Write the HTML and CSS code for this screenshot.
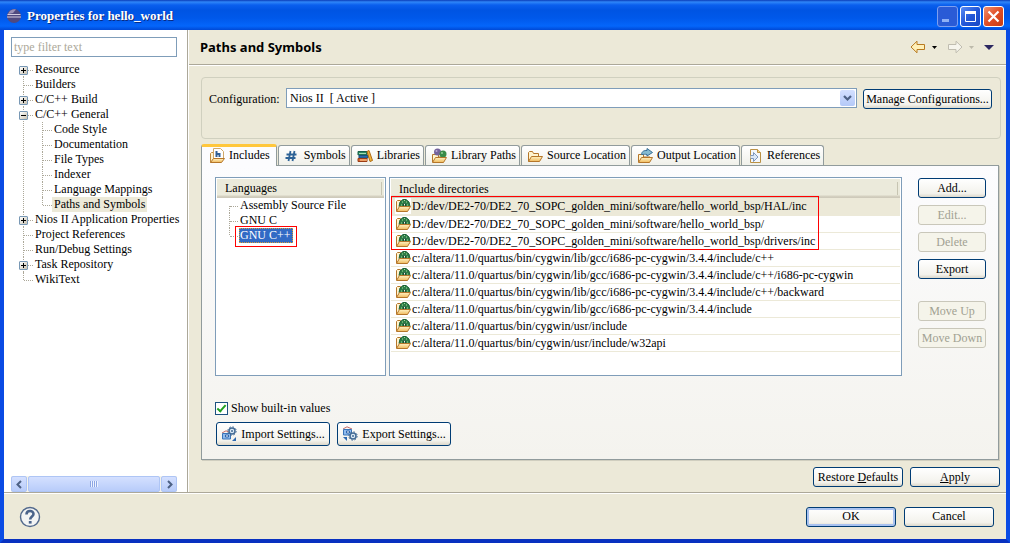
FILE: index.html
```html
<!DOCTYPE html>
<html lang="en">
<head>
<meta charset="utf-8">
<title>Properties for hello_world</title>
<link rel="stylesheet" href="styles.css">
</head>
<body>
<svg class="sprites" aria-hidden="true">
  <defs>
    <linearGradient id="fold" x1="0" y1="0" x2="0" y2="1"><stop offset="0" stop-color="#fff3c4"/><stop offset="1" stop-color="#f0b95c"/></linearGradient>
    <symbol id="folder" viewBox="0 0 16 16">
      <path d="M1.500 13.500V4.500L2.500 3.500H5.500L6.500 5.500H11.500V8.500" fill="#fff4cf" stroke="#b5762a"/>
      <path d="M1.500 13.500L4.500 8.500H15.500L12.500 13.500Z" fill="url(#fold)" stroke="#b5762a"/>
    </symbol>
    <symbol id="include" viewBox="0 0 16 16">
      <path d="M1.500 14.500V5.500L2.500 4.500H5.500V12" fill="#fff4cf" stroke="#c08a3c"/>
      <path d="M4.500 11V.5H11.500L14.500 3.500V11Z" fill="#fff" stroke="#d0a868"/>
      <path d="M7.500 3V9M7.500 6H10.500V9" fill="none" stroke="#2f5f94" stroke-width="2"/>
      <path d="M1.500 14.500L4.500 10.500H15.500L12.500 14.500Z" fill="url(#fold)" stroke="#b5762a"/>
    </symbol>
    <symbol id="hash" viewBox="0 0 16 16">
      <path d="M6.500 3L4.500 13M10.500 3L8.500 13M2.500 6.500H12.500M1.500 10H11.500" fill="none" stroke="#2d6296" stroke-width="1.800"/>
    </symbol>
    <symbol id="books" viewBox="0 0 16 16">
      <path d="M1 3.500H10V7H1Z" fill="#2d8b62" stroke="#17604a"/><path d="M2 5.500H9" stroke="#a8ddb5"/>
      <path d="M2 7.500H11V10H2Z" fill="#2a6ea8" stroke="#1b4d80"/>
      <path d="M1 10.500H10V13.500H1Z" fill="#d9642e" stroke="#9c3c14"/><path d="M3 12H10" stroke="#ffd9a0"/>
      <path d="M10 3.500L12 2.500L15.500 12.500L13 13.500Z" fill="#f5b53a" stroke="#ad6a12"/>
    </symbol>
    <symbol id="libpaths" viewBox="0 0 16 16">
      <path d="M1.500 14V6.500H7.500V9H12" fill="#fff4cf" stroke="#b5762a"/>
      <circle cx="6.500" cy="4" r="3.500" fill="#75639d"/><circle cx="5.500" cy="3" r="1" fill="#b8a8d5"/>
      <circle cx="12" cy="6" r="3.500" fill="#398b48"/><circle cx="11" cy="5" r="1" fill="#94d19b"/>
      <path d="M1.500 14.500L4.500 9.500H15.500L12.500 14.500Z" fill="url(#fold)" stroke="#b5762a"/>
    </symbol>
    <symbol id="output" viewBox="0 0 16 16">
      <path d="M1.500 14V6.500H6.500V9H13" fill="#fff4cf" stroke="#b5762a"/>
      <path d="M4.500 6.500C5 3 7 2.500 10 2.500V.5L15.500 4.500L10 8V6.500C8 6 7 6.500 4.500 6.500Z" fill="#86bbd0" stroke="#376e96"/>
      <path d="M1.500 14.500L4.500 9.500H15.500L12.500 14.500Z" fill="url(#fold)" stroke="#b5762a"/>
    </symbol>
    <symbol id="refs" viewBox="0 0 16 16">
      <path d="M3.500 1.500H10.500L13.500 4.500V14.500H3.500Z" fill="#f4f7fc" stroke="#bb9145"/>
      <path d="M10.500 1.500V4.500H13.500" fill="#f4d88c" stroke="#bb9145"/>
      <path d="M3.500 7.500H6.500V4.500L11 9L6.500 13.500V10.500H3.500" fill="#dce8f8" stroke="#7f98be"/>
    </symbol>
    <symbol id="incdir" viewBox="0 0 16 16">
      <path d="M1.500 13V3.500L2.500 2.500H5.500V9" fill="#fff4cf" stroke="#b5762a"/>
      <path d="M4 8.500L5 4L8 1.500H11L14 4L15 8.500Z" fill="#2d7d46" stroke="#1d6238"/>
      <path d="M7 4H8M11 4H12M6 7H7M12 7H13M9 2.500H10" stroke="#a6dc9e"/>
      <path d="M8.500 8L8.500 6L9.500 5L10.500 6V8Z" fill="#eff7e7" stroke="#174f33"/>
      <path d="M1.500 13.500L4.500 8.500H15.500L12.500 13.500Z" fill="url(#fold)" stroke="#b5762a"/>
    </symbol>
    <symbol id="gear" viewBox="0 0 10 10">
      <circle cx="5" cy="5" r="3" fill="#dbe9f5" stroke="#436b95" stroke-width="1.500"/>
      <circle cx="5" cy="5" r="4.200" fill="none" stroke="#436b95" stroke-dasharray="1.600 1.700"/>
      <circle cx="5" cy="5" r="1" fill="#436b95"/>
    </symbol>
    <symbol id="house" viewBox="0 0 11 10">
      <path d="M1 3L5 .8L10 3" fill="none" stroke="#c46d68"/>
      <path d="M1.500 3.500H9.500V9H1.500Z" fill="#8fbcf0" stroke="#3974b8"/><path d="M4.500 5H7.500V7H4.500Z" fill="#fff" stroke="#3165a8"/>
    </symbol>
    <symbol id="import" viewBox="0 0 16 16">
      <use href="#house" x="0" y="4" width="11" height="10"/><use href="#gear" x="6" y="0" width="10" height="10"/><path d="M15 11V15H11Z" fill="#2c68b0"/>
    </symbol>
    <symbol id="export" viewBox="0 0 16 16">
      <use href="#house" x="0" y="0" width="11" height="10"/><use href="#gear" x="6" y="5" width="10" height="10"/><path d="M1 11H5V15Z" fill="#2c68b0"/>
    </symbol>
  </defs>
</svg>
<div class="window">
  <header class="titlebar">
    <svg class="logo" viewBox="0 0 16 16" aria-hidden="true"><circle cx="8" cy="8" r="7" fill="#50497f"/><path d="M2 6A7 7 0 0 1 10 1.500L7 5Z" fill="#9c92b8"/><path d="M1.500 6.500H14.500M1 9H15" stroke="#d4cde2"/></svg>
    <h1>Properties for hello_world</h1>
    <div class="winbtns">
      <button class="wb dim" aria-label="Minimize"><svg viewBox="0 0 19 19"><path d="M4 13.500H11" stroke="#8fb0f5" stroke-width="3"/></svg></button>
      <button class="wb" aria-label="Maximize"><svg viewBox="0 0 19 19"><path d="M4.500 5V14.500H14.500V5" fill="none" stroke="#fff"/><path d="M4 5.500H15" stroke="#fff" stroke-width="3"/></svg></button>
      <button class="wb close" aria-label="Close"><svg viewBox="0 0 19 19"><path d="M4.500 4.500L14.500 14.500M14.500 4.500L4.500 14.500" stroke="#fff" stroke-width="2.200"/></svg></button>
    </div>
  </header>
  <div class="content">
    <nav class="side">
      <input class="filter" type="text" placeholder="type filter text" aria-label="Filter">
      <ul class="tree">
        <li class="exp"><span>Resource</span></li>
        <li><span>Builders</span></li>
        <li class="exp"><span>C/C++ Build</span></li>
        <li class="exp open"><span>C/C++ General</span>
          <ul>
            <li><span>Code Style</span></li>
            <li><span>Documentation</span></li>
            <li><span>File Types</span></li>
            <li><span>Indexer</span></li>
            <li><span>Language Mappings</span></li>
            <li><span class="current">Paths and Symbols</span></li>
          </ul>
        </li>
        <li class="exp"><span>Nios II Application Properties</span></li>
        <li><span>Project References</span></li>
        <li><span>Run/Debug Settings</span></li>
        <li class="exp"><span>Task Repository</span></li>
        <li><span>WikiText</span></li>
      </ul>
      <div class="hscroll">
        <button class="sbtn" aria-label="Scroll left"><svg viewBox="0 0 9 9"><path d="M6 1L2.500 4.500L6 8" fill="none" stroke="#4d6185" stroke-width="2"/></svg></button>
        <div class="thumb"><i></i><i></i><i></i><i></i></div>
        <button class="sbtn" aria-label="Scroll right"><svg viewBox="0 0 9 9"><path d="M3 1L6.500 4.500L3 8" fill="none" stroke="#4d6185" stroke-width="2"/></svg></button>
      </div>
    </nav>
    <main>
      <div class="pagehead">
        <h2>Paths and Symbols</h2>
        <div class="history">
          <button aria-label="Back"><svg width="16" height="14" viewBox="0 0 16 14"><path d="M1 7L7 1.200V4.500H14.500V9.500H7V12.800Z" fill="#fff0b8" stroke="#b87a20"/></svg></button>
          <button aria-label="Back history"><svg width="5" height="3" viewBox="0 0 5 3"><path d="M0 0H5L2.500 3Z"/></svg></button>
          <button class="fwd" aria-label="Forward"><svg width="16" height="14" viewBox="0 0 16 14"><path d="M15 7L9 1.200V4.500H1.500V9.500H9V12.800Z" fill="#f6f5ed" stroke="#c0bdb0"/></svg></button>
          <button aria-label="Forward history"><svg width="5" height="3" viewBox="0 0 5 3"><path d="M0 0H5L2.500 3Z" fill="#bdbaab"/></svg></button>
          <button class="menu" aria-label="Menu"><svg width="10" height="5" viewBox="0 0 10 5"><path d="M0 0H10L5 5Z" fill="#2c2860"/></svg></button>
        </div>
      </div>
      <div class="page">
        <section class="config">
          <label for="cfg">Configuration:</label>
          <div class="combo">
            <select id="cfg"><option>Nios II&nbsp; [ Active ]</option></select>
            <svg class="drop" viewBox="0 0 15 16" aria-hidden="true"><path d="M4 6L7.500 9.500L11 6" fill="none" stroke="#4d6185" stroke-width="2.200"/></svg>
          </div>
          <button class="btn manage">Manage Configurations...</button>
        </section>
        <div class="tabs" role="tablist">
          <button class="tab active" role="tab" aria-selected="true"><svg><use href="#include"/></svg>Includes</button>
          <button class="tab" role="tab"><svg><use href="#hash"/></svg>Symbols</button>
          <button class="tab" role="tab"><svg><use href="#books"/></svg>Libraries</button>
          <button class="tab" role="tab"><svg><use href="#libpaths"/></svg>Library Paths</button>
          <button class="tab" role="tab"><svg><use href="#folder"/></svg>Source Location</button>
          <button class="tab" role="tab"><svg><use href="#output"/></svg>Output Location</button>
          <button class="tab" role="tab"><svg><use href="#refs"/></svg>References</button>
        </div>
        <section class="panel">
          <div class="lists">
            <div class="box langs">
              <div class="colhead">Languages</div>
              <ul class="langtree">
                <li><span>Assembly Source File</span></li>
                <li><span>GNU C</span></li>
                <li><span class="sel">GNU C++</span></li>
              </ul>
            </div>
            <div class="box dirs">
              <table>
                <thead><tr><th class="colhead">Include directories</th></tr></thead>
                <tbody>
                  <tr class="hl"><td><svg><use href="#incdir"/></svg>D:/dev/DE2-70/DE2_70_SOPC_golden_mini/software/hello_world_bsp/HAL/inc</td></tr>
                  <tr><td><svg><use href="#incdir"/></svg>D:/dev/DE2-70/DE2_70_SOPC_golden_mini/software/hello_world_bsp/</td></tr>
                  <tr><td><svg><use href="#incdir"/></svg>D:/dev/DE2-70/DE2_70_SOPC_golden_mini/software/hello_world_bsp/drivers/inc</td></tr>
                  <tr><td><svg><use href="#incdir"/></svg>c:/altera/11.0/quartus/bin/cygwin/lib/gcc/i686-pc-cygwin/3.4.4/include/c++</td></tr>
                  <tr><td><svg><use href="#incdir"/></svg>c:/altera/11.0/quartus/bin/cygwin/lib/gcc/i686-pc-cygwin/3.4.4/include/c++/i686-pc-cygwin</td></tr>
                  <tr><td><svg><use href="#incdir"/></svg>c:/altera/11.0/quartus/bin/cygwin/lib/gcc/i686-pc-cygwin/3.4.4/include/c++/backward</td></tr>
                  <tr><td><svg><use href="#incdir"/></svg>c:/altera/11.0/quartus/bin/cygwin/lib/gcc/i686-pc-cygwin/3.4.4/include</td></tr>
                  <tr><td><svg><use href="#incdir"/></svg>c:/altera/11.0/quartus/bin/cygwin/usr/include</td></tr>
                  <tr><td><svg><use href="#incdir"/></svg>c:/altera/11.0/quartus/bin/cygwin/usr/include/w32api</td></tr>
                </tbody>
              </table>
            </div>
            <div class="actions">
              <button class="btn">Add...</button>
              <button class="btn" disabled>Edit...</button>
              <button class="btn" disabled>Delete</button>
              <button class="btn">Export</button>
              <button class="btn apart" disabled>Move Up</button>
              <button class="btn" disabled>Move Down</button>
            </div>
          </div>
          <label class="check"><input type="checkbox" checked>Show built-in values</label>
          <div class="io">
            <button class="btn tall"><svg><use href="#import"/></svg>Import Settings...</button>
            <button class="btn tall"><svg><use href="#export"/></svg>Export Settings...</button>
          </div>
        </section>
        <div class="pagebtns">
          <button class="btn wide"><span>Restore <u>D</u>efaults</span></button>
          <button class="btn wide"><span><u>A</u>pply</span></button>
        </div>
      </div>
    </main>
  </div>
  <footer>
    <button class="help" aria-label="Help"><svg viewBox="0 0 22 22"><circle cx="11" cy="11" r="9.500" fill="#f3f4f4" stroke="#52698c" stroke-width="1.400"/><path d="M7.500 8.500C7.500 4 14.500 4 14.500 8C14.500 10.500 11.200 10.500 11.200 13.500" fill="none" stroke="#4a638a" stroke-width="2.600"/><path d="M9.800 15H12.600V17.600H9.800Z" fill="#4a638a"/></svg></button>
    <div class="dlgbtns">
      <button class="btn wide ok">OK</button>
      <button class="btn wide">Cancel</button>
    </div>
  </footer>
</div>
</body>
</html>
```

FILE: styles.css
```css
*, *::before, *::after { box-sizing: border-box; }
body { margin: 0; background: #ece9d8; }
body, button, input, select { font-family: "Liberation Serif", serif; font-size: 12px; color: #000; }
button { padding: 0; border: 0; background: none; }
ul { list-style: none; margin: 0; padding: 0; }
svg { display: block; flex: none; }
.sprites { position: absolute; width: 0; height: 0; }

.window {
  min-height: 100vh; display: flex; flex-direction: column;
  border: solid #0a4be4; border-width: 0 4px 4px; border-bottom-color: #0831c0;
  background: #ece9d8;
}
.titlebar {
  height: 30px; margin: 0 -4px; padding: 2px 6px 0; display: flex; align-items: center; gap: 5px;
  background: linear-gradient(#0a3cb8 0, #2f86f8 2px, #0a5fee 5px, #0054e3 10px, #0058ea 18px, #0466fb 26px, #0049d6 30px);
}
.logo { width: 16px; height: 16px; }
h1 { flex: 1; margin: 0; font-size: 13px; line-height: 16px; color: #fff; text-shadow: 1px 1px #0a2a80; }
.winbtns { display: flex; gap: 2px; }
.wb {
  width: 21px; height: 21px; border: 1px solid #fff; border-radius: 3px;
  background: linear-gradient(135deg, #5a8cf4, #2257d8 50%, #1747c4);
}
.wb.dim { border-color: #7d9ff0; background: #2a5bd6; }
.wb.close { background: linear-gradient(135deg, #f09070, #e04e26 50%, #c83c14); }

.content { flex: 1; display: flex; border-bottom: 1px solid #aca899; }
.side {
  width: 184px; flex: none; display: flex; flex-direction: column; padding: 7px 10px 0 7px;
  background: #fff; border-right: 1px solid #aca899;
}
.filter { width: 100%; height: 20px; border: 1px solid #7f9db9; padding: 0 2px; background: #fff; }
.filter::placeholder { color: #aca899; opacity: 1; }
.tree { flex: 1; margin-top: 5px; white-space: nowrap; line-height: 15px; }
.tree li { position: relative; padding-left: 24px; }
.tree li::before { content: ""; position: absolute; left: 12px; top: 0; bottom: 0; border-left: 1px dotted #aca899; }
.tree > li:first-child::before { top: 8px; }
.tree li:last-child::before { bottom: auto; height: 8px; }
.tree li::after { content: ""; position: absolute; left: 13px; top: 8px; width: 9px; border-top: 1px dotted #aca899; }
.tree ul { margin-left: -5px; }
.tree li span { display: inline-block; }
.tree .exp > span::before {
  content: ""; position: absolute; z-index: 1; left: 8px; top: 4px; width: 9px; height: 9px;
  border: 1px solid #7898b5; border-radius: 1px;
  background: linear-gradient(#000, #000) 1px 3px / 5px 1px no-repeat, linear-gradient(#000, #000) 3px 1px / 1px 5px no-repeat, linear-gradient(135deg, #fff, #c8c2b2);
}
.tree .open > span::before { background: linear-gradient(#000, #000) 1px 3px / 5px 1px no-repeat, linear-gradient(135deg, #fff, #c8c2b2); }
.tree .current { background: #ece9d8; padding: 0 2px; margin-left: -2px; }
.hscroll { display: flex; height: 16px; gap: 1px; background: #f3f2ea; }
.sbtn, .thumb { border: 1px solid #aec5f5; border-radius: 2px; background: linear-gradient(#d4e0ff, #b8ccfa); display: flex; align-items: center; justify-content: center; }
.sbtn { width: 16px; }
.sbtn svg { width: 9px; height: 9px; }
.thumb { flex: 1; }
.thumb i { width: 2px; height: 6px; background: #8ca6e4; border-right: 1px solid #eef3ff; }

main { flex: 1; min-width: 0; display: flex; flex-direction: column; border-left: 1px solid #fff; }
.pagehead { height: 35px; padding: 0 12px 0 11px; display: flex; align-items: center; justify-content: space-between; border-bottom: 1px solid #aca899; box-shadow: 0 1px #fff; }
h2 { margin: 0; font: bold 13px/16px "Noto Sans", sans-serif; }
.history { display: flex; align-items: center; gap: 6px; }
.fwd, .menu { margin-left: 4px; }
.page { flex: 1; display: flex; flex-direction: column; padding: 12px 5px 5px 12px; }
.config { height: 62px; padding: 10px 8px 0 7px; display: flex; align-items: flex-start; border: 1px solid #d0d0bf; border-radius: 4px; }
.config label { width: 77px; line-height: 22px; }
.combo { flex: 1; position: relative; }
.combo select { display: block; width: 100%; height: 20px; padding: 0 3px; border: 1px solid #7f9db9; border-radius: 0; background: #fff; appearance: none; }
.drop { position: absolute; right: 2px; top: 2px; width: 15px; height: 16px; background: linear-gradient(#d4e0ff, #b4c9f8); border-radius: 2px; pointer-events: none; }

.btn {
  height: 20px; border: 1px solid #003c74; border-radius: 3px;
  background: linear-gradient(#fff, #f3f2ec 80%, #dcd8cb);
  display: flex; align-items: center; justify-content: center; gap: 4px; white-space: nowrap;
}
.btn:disabled { border-color: #c9c7ba; background: #f5f4ea; color: #a1a192; }
.manage { width: 129px; margin: 1px 0 0 6px; }
.wide { width: 90px; }
.tall { width: 114px; height: 24px; }
.btn svg, .tab svg { width: 16px; height: 16px; }
.ok { box-shadow: inset 0 0 0 2px #a9c2f0; }

.tabs { display: flex; align-items: flex-end; gap: 1px; margin-top: 5px; }
.tab {
  height: 20px; padding: 0 3px 0 5px; display: flex; align-items: center; gap: 4px; white-space: nowrap;
  border: 1px solid #919b9c; border-bottom: 0; border-radius: 3px 3px 0 0;
  background: linear-gradient(#fff, #f0f0ea);
}
.tab.active { position: relative; height: 22px; margin: 0 0 -1px; padding: 0 6px 2px 7px; border-top: 3px solid #ffc73c; background: #fcfcfe; }
.panel {
  flex: 1; padding: 11px 12px 0 13px;
  border: 1px solid #919b9c; box-shadow: 1px 1px #d0cebf; margin-right: 2px;
  background: linear-gradient(#fcfcfe, #f4f3ee);
}
.lists { display: flex; }
.box { height: 199px; border: 1px solid #7f9db9; background: #fff; position: relative; padding: 1px 1px 0; }
.langs { width: 171px; flex: none; margin-right: 3px; }
.dirs { flex: 1; min-width: 0; }
.colhead {
  height: 19px; padding: 2px 8px 0; text-align: left; font-weight: normal; line-height: 15px;
  background: linear-gradient(#ebeadb 16px, #d6d2c2 17px, #cbc7b8); position: relative;
}
.colhead::after { content: ""; position: absolute; right: 2px; top: 3px; height: 13px; border-right: 1px solid #c7c5b2; }
.langtree { line-height: 15px; }
.langtree li { position: relative; padding-left: 23px; }
.langtree li::before { content: ""; position: absolute; left: 12px; top: 0; bottom: 0; border-left: 1px dotted #aca899; }
.langtree li:first-child::before { top: 8px; }
.langtree li:last-child::before { bottom: 8px; }
.langtree li::after { content: ""; position: absolute; left: 13px; top: 8px; width: 8px; border-top: 1px dotted #aca899; }
.sel { display: inline-block; margin-left: -1px; padding: 0 2px 0 1px; background: #316ac5; color: #fff; outline: 1px dotted #d99a3a; outline-offset: -1px; }
.langs::after, .dirs::after { content: ""; position: absolute; border: 1px solid #f00; pointer-events: none; }
.langs::after { left: 19px; top: 48px; width: 62px; height: 21px; }
.dirs::after { left: 1px; top: 18px; width: 428px; height: 54px; }
table { width: 100%; border-collapse: collapse; }
td { height: 17px; padding: 0 0 0 4px; border-bottom: 1px solid #ece9d8; line-height: 16px; white-space: nowrap; }
td svg { display: inline-block; width: 16px; height: 16px; margin-right: 1px; vertical-align: top; background: #fff; }
.hl { background: #ece9d8; }
.actions { width: 68px; flex: none; margin: 1px 0 0 16px; display: flex; flex-direction: column; gap: 7px; }
.apart { margin-top: 15px; }
.check { display: flex; align-items: center; gap: 3px; margin-top: 25px; line-height: 14px; }
.check input { width: 13px; height: 13px; margin: 0; appearance: none; border: 1px solid #1c5180; background: #fff; position: relative; }
.check input:checked::after { content: ""; position: absolute; left: 3px; top: 0; width: 5px; height: 9px; border: solid #21a121; border-width: 0 2px 2px 0; transform: rotate(42deg); }
.io { display: flex; gap: 7px; margin: 7px 0 0 1px; }
.pagebtns { display: flex; justify-content: flex-end; gap: 7px; margin: 7px 1px 0 0; }
footer { height: 46px; flex: none; border-top: 1px solid #fff; display: flex; align-items: center; justify-content: space-between; padding: 0 12px 0 15px; }
.help svg { width: 22px; height: 22px; }
.dlgbtns { display: flex; gap: 8px; }
```
